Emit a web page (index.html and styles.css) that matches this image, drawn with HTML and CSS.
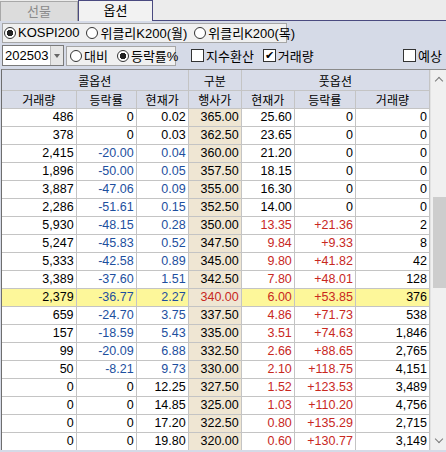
FILE: index.html
```html
<!DOCTYPE html>
<html lang="ko">
  <head>
    <meta charset="UTF-8" />
    <title>옵션 시세</title>
    <link rel="stylesheet" href="styles.css">
  </head>
  <body>
    <div class="tabs">
      <div class="tab">선물</div>
      <div class="tab active">옵션</div>
      <div class="tab-rest"></div>
    </div>
    <div class="panel">
      <div class="row">
        <div class="box market">
          <label class="radio on">KOSPI200</label>
          <label class="radio">위클리K200(월)</label>
          <label class="radio">위클리K200(목)</label>
        </div>
      </div>
      <div class="row">
        <div class="combo">
          <span class="combo-val">202503</span>
          <span class="combo-btn"></span>
        </div>
        <div class="box mode">
          <label class="radio">대비</label>
          <label class="radio on">등락률%</label>
        </div>
        <label class="check chk-idx">지수환산</label>
        <label class="check on">거래량</label>
        <label class="check chk-exp">예상</label>
      </div>
      <div class="grid">
        <div class="grid-body">
          <table>
            <colgroup>
              <col style="width:74px" />
              <col style="width:60px" />
              <col style="width:52px" />
              <col style="width:53px" />
              <col style="width:53px" />
              <col style="width:61px" />
              <col style="width:74px" />
            </colgroup>
            <thead>
              <tr class="h1">
                <th colspan="3">콜옵션</th>
                <th>구분</th>
                <th colspan="3">풋옵션</th>
              </tr>
              <tr class="h2">
                <th>거래량</th>
                <th>등락률</th>
                <th>현재가</th>
                <th>행사가</th>
                <th>현재가</th>
                <th>등락률</th>
                <th>거래량</th>
              </tr>
            </thead>
            <tbody id="rows"></tbody>
          </table>
        </div>
        <div class="scroll">
          <span class="arrow up"></span>
          <span class="thumb"></span>
          <span class="arrow down"></span>
        </div>
      </div>
    </div>
    <script>
      // 콜 거래량, 콜 등락률, 콜 현재가, 행사가, 풋 현재가, 풋 등락률, 풋 거래량
      const data = [
        ["486", "0", "0.02", "365.00", "25.60", "0", "0"],
        ["378", "0", "0.03", "362.50", "23.65", "0", "0"],
        ["2,415", "-20.00", "0.04", "360.00", "21.20", "0", "0"],
        ["1,896", "-50.00", "0.05", "357.50", "18.15", "0", "0"],
        ["3,887", "-47.06", "0.09", "355.00", "16.30", "0", "0"],
        ["2,286", "-51.61", "0.15", "352.50", "14.00", "0", "0"],
        ["5,930", "-48.15", "0.28", "350.00", "13.35", "+21.36", "2"],
        ["5,247", "-45.83", "0.52", "347.50", "9.84", "+9.33", "8"],
        ["5,333", "-42.58", "0.89", "345.00", "9.80", "+41.82", "42"],
        ["3,389", "-37.60", "1.51", "342.50", "7.80", "+48.01", "128"],
        ["2,379", "-36.77", "2.27", "340.00", "6.00", "+53.85", "376"],
        ["659", "-24.70", "3.75", "337.50", "4.86", "+71.73", "538"],
        ["157", "-18.59", "5.43", "335.00", "3.51", "+74.63", "1,846"],
        ["99", "-20.09", "6.88", "332.50", "2.66", "+88.65", "2,765"],
        ["50", "-8.21", "9.73", "330.00", "2.10", "+118.75", "4,151"],
        ["0", "0", "12.25", "327.50", "1.52", "+123.53", "3,489"],
        ["0", "0", "14.85", "325.00", "1.03", "+110.20", "4,756"],
        ["0", "0", "17.20", "322.50", "0.80", "+135.29", "2,715"],
        ["0", "0", "19.80", "320.00", "0.60", "+130.77", "3,149"]
      ];
      const atm = "340.00";
      let tbody = document.getElementById("rows");
      function tone(rate) {
        if (rate.startsWith("-")) return "down";
        if (rate.startsWith("+")) return "up";
        return "";
      }
      data.forEach(function (r) {
        let tr = document.createElement("tr");
        if (r[3] === atm) tr.className = "atm";
        const cls = ["", tone(r[1]), tone(r[1]), "strike", tone(r[5]), tone(r[5]), ""];
        r.forEach(function (v, i) {
          let td = document.createElement("td");
          td.textContent = v;
          if (cls[i]) td.className = cls[i];
          tr.appendChild(td);
        });
        tbody.appendChild(tr);
      });
    </script>
  </body>
</html>
```

FILE: styles.css
```css
body {
  margin: 0;
  width: 446px;
  height: 452px;
  overflow: hidden;
  font-family: "Liberation Sans", "Noto Sans CJK KR", sans-serif;
  font-size: 12px;
  color: #000;
  background: #d5dae7;
}
.tabs {
  display: flex;
  height: 21px;
  background: #ececec;
}
.tab {
  width: 76px;
  margin-top: 1px;
  border: 1px solid #a8a8a8;
  border-bottom: none;
  background: #dcdcdc;
  color: #8a8a8a;
  font-size: 13px;
  line-height: 19px;
  text-align: center;
}
.tab.active {
  width: 73px;
  margin-top: 0;
  border: 1px solid #4a4a80;
  border-bottom: none;
  background: #f2f2f2;
  color: #000;
}
.tab-rest {
  flex: 1;
  border-bottom: 1px solid #4a4a80;
}
.panel {
  background: #d5dae7;
}
.row {
  display: flex;
  align-items: center;
  height: 23px;
  padding-left: 2px;
}
.box {
  display: flex;
  align-items: center;
  height: 18px;
  border: 1px solid #a6a6a6;
  background: #f0f0f0;
  font-size: 13px;
}
.market {
  width: 282px;
  gap: 7px;
  padding-left: 1px;
}
.mode {
  width: 105px;
  gap: 9px;
  margin-left: 2px;
  padding-left: 3px;
}
.radio,
.check {
  display: flex;
  align-items: center;
  font-size: 13px;
  white-space: nowrap;
}
.radio::before {
  content: "";
  box-sizing: border-box;
  width: 12px;
  height: 12px;
  margin-right: 2px;
  border: 1px solid #333;
  border-radius: 50%;
  background: #fff;
}
.radio.on::before {
  background: radial-gradient(circle, #222 0 3px, #fff 3.5px);
}
.check::before {
  content: "";
  box-sizing: border-box;
  width: 13px;
  height: 13px;
  margin-right: 2px;
  border: 1px solid #333;
  background: #fff;
  font-size: 11px;
  line-height: 11px;
  text-align: center;
}
.check.on {
  margin-left: 9px;
}
.check.on::before {
  content: "✔";
}
.chk-idx {
  margin-left: 15px;
}
.chk-exp {
  margin-left: auto;
  margin-right: 4px;
}
.combo {
  display: flex;
  width: 60px;
  height: 19px;
  border: 1px solid #7a7a7a;
  background: #fff;
}
.combo-val {
  flex: 1;
  padding-left: 2px;
  font-size: 13px;
  line-height: 19px;
}
.combo-btn {
  position: relative;
  width: 12px;
  border-left: 1px solid #b8b8b8;
  background: #e6e6e6;
}
.combo-btn::after {
  content: "";
  position: absolute;
  left: 3px;
  top: 8px;
  border-left: 3px solid transparent;
  border-right: 3px solid transparent;
  border-top: 4px solid #666;
}
.grid {
  display: flex;
  margin: 2px 0 0 1px;
  border-top: 1px solid #8a8a8a;
  border-left: 1px solid #6e6e6e;
  height: 380px;
  background: #fff;
}
.grid-body {
  width: 428px;
  overflow: hidden;
}
table {
  border-collapse: collapse;
  table-layout: fixed;
  width: 428px;
}
th,
td {
  border: 1px solid #c4c4c4;
  padding: 0 2px 0 0;
  white-space: nowrap;
  overflow: hidden;
}
th {
  background: #d8dce8;
  font-family: "Noto Sans CJK KR", sans-serif;
  font-weight: normal;
  font-size: 12px;
  text-align: center;
  padding: 0;
}
.h1 th {
  height: 20px;
  border-top: none;
}
.h2 th {
  height: 17px;
  line-height: 17px;
}
td {
  height: 17px;
  font-size: 12.5px;
  line-height: 17px;
  text-align: right;
}
tr td:first-child,
tr th:first-child {
  border-left: none;
}
td.strike {
  background: #efe6d3;
}
td.down {
  color: #1d4f9e;
}
td.up {
  color: #c8281e;
}
tr.atm td {
  background: #fdf79a;
}
tr.atm td.strike {
  background: #efe6d3;
  color: #c8281e;
}
.scroll {
  position: relative;
  flex: 1;
  background: #f0f0f0;
  border-left: 1px solid #e2e2e2;
}
.thumb {
  position: absolute;
  left: 2px;
  right: 0;
  top: 127px;
  height: 91px;
  background: #cdcdcd;
}
.arrow {
  position: absolute;
  left: 5px;
  width: 5px;
  height: 5px;
  border-left: 1.5px solid #7a7a7a;
  border-top: 1.5px solid #7a7a7a;
}
.arrow.up {
  top: 8px;
  transform: rotate(45deg);
}
.arrow.down {
  bottom: 8px;
  transform: rotate(225deg);
}
```
